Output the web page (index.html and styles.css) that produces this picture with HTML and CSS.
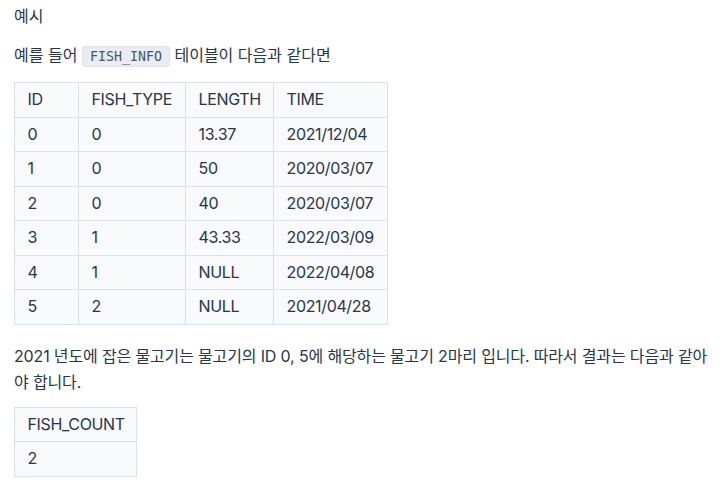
FILE: index.html
```html
<!DOCTYPE html>
<html lang="ko">
<head>
<meta charset="utf-8">
<link rel="stylesheet" href="styles.css">
</head>
<body>
<div class="content">
  <p class="label">예시</p>
  <p class="intro">예를 들어 <code>FISH_INFO</code> 테이블이 다음과 같다면</p>
  <table class="data main">
    <colgroup>
      <col class="c1"><col class="c2"><col class="c3"><col class="c4">
    </colgroup>
    <thead>
      <tr><th>ID</th><th>FISH_TYPE</th><th>LENGTH</th><th>TIME</th></tr>
    </thead>
    <tbody>
      <tr><td>0</td><td>0</td><td>13.37</td><td>2021/12/04</td></tr>
      <tr><td>1</td><td>0</td><td>50</td><td>2020/03/07</td></tr>
      <tr><td>2</td><td>0</td><td>40</td><td>2020/03/07</td></tr>
      <tr><td>3</td><td>1</td><td>43.33</td><td>2022/03/09</td></tr>
      <tr><td>4</td><td>1</td><td>NULL</td><td>2022/04/08</td></tr>
      <tr><td>5</td><td>2</td><td>NULL</td><td>2021/04/28</td></tr>
    </tbody>
  </table>
  <p class="desc">2021 년도에 잡은 물고기는 물고기의 ID 0, 5에 해당하는 물고기 2마리 입니다. 따라서 결과는 다음과 같아야 합니다.</p>
  <table class="data result">
    <thead><tr><th>FISH_COUNT</th></tr></thead>
    <tbody><tr><td>2</td></tr></tbody>
  </table>
</div>
</body>
</html>
```
FILE: styles.css
```css
html, body {
  margin: 0;
  padding: 0;
  background: #ffffff;
}
body {
  font-family: Inter, "Noto Sans CJK KR", sans-serif;
  font-size: 16px;
  color: #263747;
}
.content {
  padding: 3px 10px 0 14px;
  width: 700px;
}
p {
  margin: 0;
  line-height: 26px;
}
.label {
  margin-bottom: 13px;
}
.intro {
  margin-bottom: 14px;
}
code {
  font-family: "DejaVu Sans Mono", "Liberation Mono", monospace;
  font-size: 13.3px;
  line-height: 16px;
  background: #e9ecf3;
  border: 1px solid #dde3ec;
  border-radius: 4px;
  padding: 2px 7px;
  color: #44576c;
}
.data {
  border-collapse: collapse;
  background: #f9fafc;
  margin-left: -0.5px;
}
.main {
  table-layout: fixed;
  width: 373px;
}
.data th, .data td {
  border: 1px solid #d7e2eb;
  padding: 6px 10px 6px 13px;
  line-height: 21.5px;
  font-weight: 400;
  text-align: left;
  white-space: nowrap;
  letter-spacing: -0.35px;
}
.c1 { width: 64px; }
.c2 { width: 107px; }
.c3 { width: 88px; }
.c4 { width: 114px; }
.result th, .result td {
  padding-right: 11px;
}
.desc {
  margin-top: 18px;
  margin-bottom: 12px;
  letter-spacing: -0.15px;
}
```
